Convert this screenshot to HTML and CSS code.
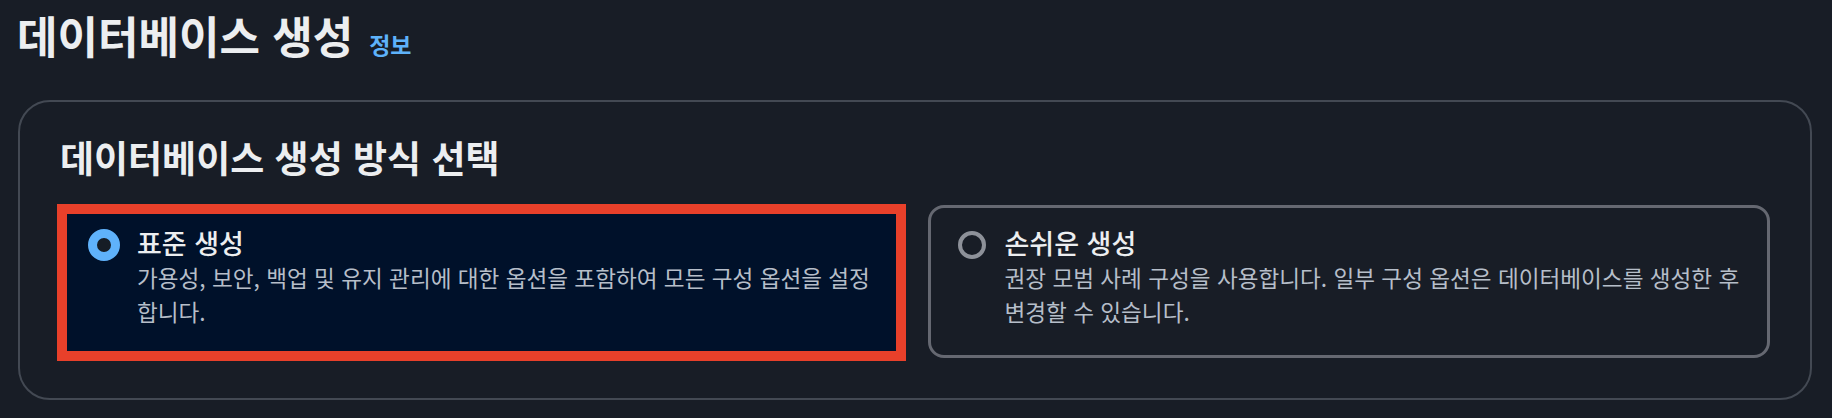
FILE: index.html
```html
<!DOCTYPE html>
<html lang="ko">
<head>
<meta charset="utf-8">
<title>데이터베이스 생성</title>
<link rel="stylesheet" href="styles.css">
</head>
<body>
<div class="page-header">
  <h1>데이터베이스 생성</h1>
  <a class="info-link" href="#">정보</a>
</div>

<div class="container">
  <h2>데이터베이스 생성 방식 선택</h2>
  <div class="tiles">
    <label class="tile selected">
      <span class="radio-slot"><span class="radio checked"></span></span>
      <span class="tile-text">
        <span class="tile-title">표준 생성</span>
        <span class="tile-desc">가용성, 보안, 백업 및 유지 관리에 대한 옵션을 포함하여 모든 구성 옵션을 설정합니다.</span>
      </span>
    </label>
    <label class="tile">
      <span class="radio-slot"><span class="radio"></span></span>
      <span class="tile-text">
        <span class="tile-title">손쉬운 생성</span>
        <span class="tile-desc">권장 모범 사례 구성을 사용합니다. 일부 구성 옵션은 데이터베이스를 생성한 후 변경할 수 있습니다.</span>
      </span>
    </label>
  </div>
</div>
</body>
</html>
```

FILE: styles.css
```css
body {
  margin: 0;
  padding: 0;
  background-color: #181d26;
  color: #e9ebed;
  font-family: "Noto Sans CJK KR", "Noto Sans", sans-serif;
}

/*---------------- Header ----------------*/

.page-header {
  display: flex;
  align-items: baseline;
  gap: 16px;
  padding: 5px 16px 0 17px;
  height: 100px;
  box-sizing: border-box;
}

.page-header h1 {
  margin: 0;
  font-size: 44px;
  font-weight: 700;
  line-height: 60px;
  color: #eceef0;
}

.info-link {
  font-size: 23px;
  font-weight: 700;
  color: #5eb2fa;
  text-decoration: none;
}

/*---------------- Container ----------------*/

.container {
  margin: 0 20px 0 18px;
  border: 2px solid #434953;
  border-radius: 32px;
  padding: 30px 40px 40px 40px;
}

.container h2 {
  margin: 0 0 23px 0;
  font-size: 37px;
  font-weight: 700;
  line-height: 50px;
  color: #eceef0;
}

.tiles {
  display: grid;
  grid-template-columns: 1fr 1fr;
  gap: 25px;
}

.tile {
  position: relative;
  display: flex;
  gap: 17px;
  border: 3px solid #656871;
  border-radius: 16px;
  padding: 17px 20px 26px 25px;
}

.tile.selected {
  background-color: #00112a;
  border-color: #00112a;
}

/* red highlight frame drawn over the selected tile */
.tile.selected::after {
  content: "";
  position: absolute;
  top: -4px;
  left: -6px;
  right: -6px;
  bottom: -6px;
  border: 10px solid #e8402a;
}

.radio-slot {
  flex: none;
  width: 32px;
  height: 36px;
  display: flex;
  justify-content: center;
  padding-top: 4px;
  box-sizing: border-box;
}

.radio {
  width: 28px;
  height: 28px;
  margin-top: 2px;
  border: 4px solid #8d9199;
  border-radius: 50%;
  box-sizing: border-box;
}

.radio.checked {
  width: 32px;
  height: 32px;
  margin-top: 0;
  border: 9px solid #5fb2fb;
  background-color: #161d26;
}

.tile-text {
  display: flex;
  flex-direction: column;
}

.tile-title {
  font-size: 27px;
  font-weight: 500;
  line-height: 36px;
  color: #eceef0;
}

.tile-desc {
  font-size: 22.6px;
  line-height: 34px;
  color: #b6bec9;
}
```
